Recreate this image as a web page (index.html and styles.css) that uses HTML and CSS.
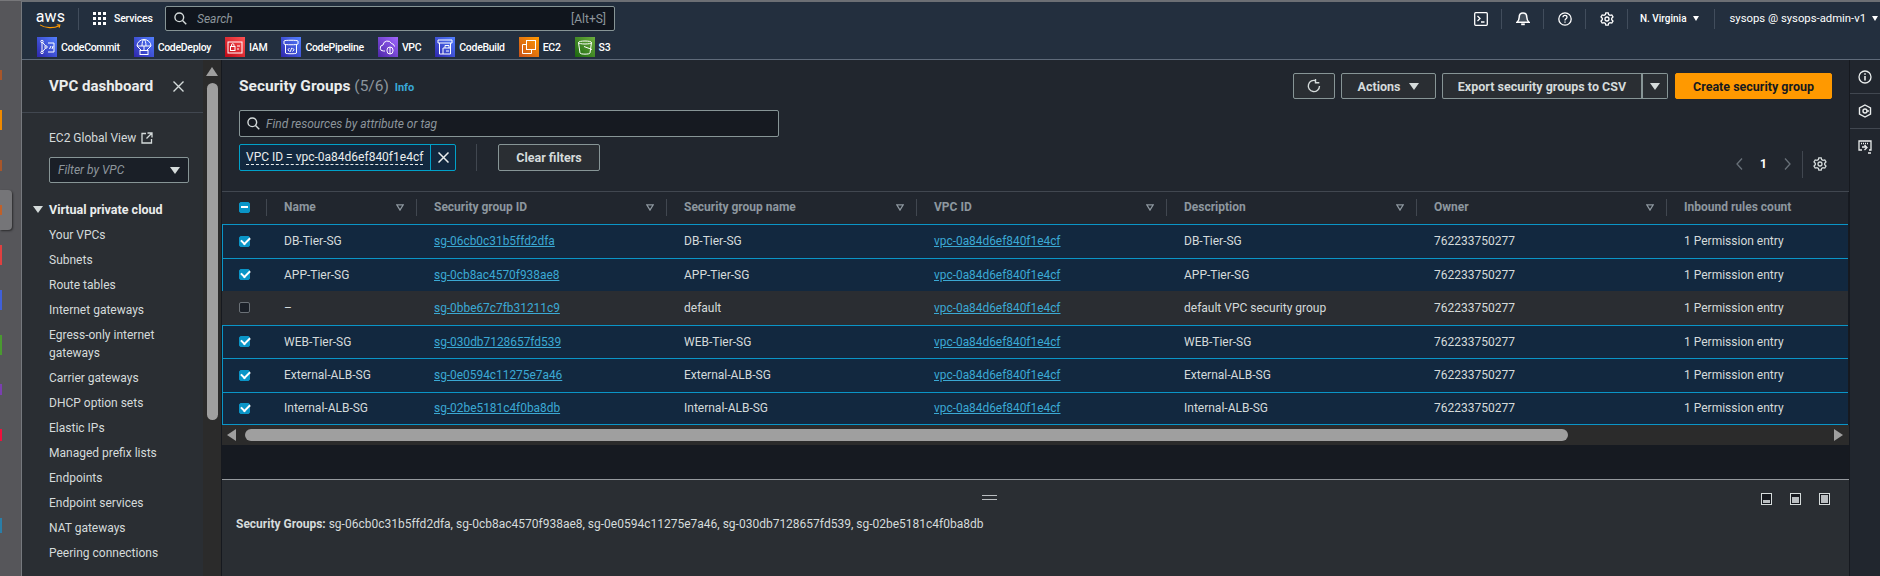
FILE: index.html
```html
<!DOCTYPE html>
<html lang="en">
<head>
<meta charset="UTF-8">
<title>Security Groups | VPC Console</title>
<link rel="stylesheet" href="styles.css">
</head>
<body>
<div class="strip">
  <i class="mark m1"></i>
  <i class="mark m2"></i>
  <i class="mark m3"></i>
  <div class="tile"><i class="mark m4"></i></div>
  <i class="mark m5"></i>
  <i class="mark m6"></i>
  <i class="mark m7"></i>
  <i class="mark m8"></i>
  <i class="mark m9"></i>
  <i class="mark m10"></i>
</div>
<div class="app">
  <header class="topbar">
    <div class="bar-main">
      <div class="logo">
        <span class="logo-text">aws</span>
        <svg class="logo-smile" viewBox="0 0 27 6"><path d="M1 1c6 4 16 4.500 23 1M21 .8l3.800.4-1 3.300" fill="none" stroke="#f90" stroke-width="1.300"/></svg>
      </div>
      <span class="bar-sep"></span>
      <svg class="grid-icon" viewBox="0 0 13 13" fill="#fff"><rect width="3" height="3"/><rect x="5" width="3" height="3"/><rect x="10" width="3" height="3"/><rect y="5" width="3" height="3"/><rect x="5" y="5" width="3" height="3"/><rect x="10" y="5" width="3" height="3"/><rect y="10" width="3" height="3"/><rect x="5" y="10" width="3" height="3"/><rect x="10" y="10" width="3" height="3"/></svg>
      <span class="services">Services</span>
      <div class="search">
        <svg class="search-icon" viewBox="0 0 14 14" fill="none" stroke="#d5dbdb" stroke-width="1.500"><circle cx="5.700" cy="5.700" r="4.700"/><path d="M9.200 9.200l4 4"/></svg>
        <span class="search-text">Search</span>
        <span class="search-key">[Alt+S]</span>
      </div>
      <div class="bar-right">
        <span class="bar-icon"><svg viewBox="0 0 14 14" fill="none" stroke="#fff" stroke-width="1.300"><rect x=".7" y=".7" width="12.600" height="12.600" rx="1"/><path d="M3.500 4l2.500 2.500L3.500 9M7 10h3.500"/></svg></span>
        <span class="bar-icon"><svg viewBox="0 0 14 14" fill="none" stroke="#fff" stroke-width="1.500"><path d="M7 1c-2.600 0-3.800 2-3.800 4.200 0 2.500-.7 3.600-2.200 5h12c-1.500-1.400-2.200-2.500-2.200-5C10.800 3 9.600 1 7 1z" fill="#fff" fill-opacity=".15"/><path d="M5.200 12.300h3.600" stroke-width="1.800"/></svg></span>
        <span class="bar-icon"><svg viewBox="0 0 14 14" fill="none" stroke="#fff" stroke-width="1.300"><circle cx="7" cy="7" r="6.200"/><path d="M5 5.300C5 4 6 3.400 7 3.400s2 .7 2 1.800c0 1.500-2 1.500-2 3.200M7 9.500v1.300"/></svg></span>
        <span class="bar-icon"><svg viewBox="0 0 14 14" fill="none" stroke="#fff" stroke-width="1.300"><path d="M5.800.8h2.400l.4 1.800 1.400.8 1.800-.5 1.200 2-1.300 1.400v1.400l1.300 1.400-1.200 2-1.800-.5-1.400.8-.4 1.800H5.800l-.4-1.800-1.400-.8-1.800.5-1.200-2 1.300-1.400V6.300L1 4.900l1.200-2 1.800.5 1.400-.8z"/><circle cx="7" cy="7" r="2"/></svg></span>
        <span class="bar-menu region">N. Virginia <i class="caret small"></i></span>
        <span class="bar-menu user">sysops @ sysops-admin-v1 <i class="caret small"></i></span>
      </div>
    </div>
    <div class="favs">
      <span class="fav"><svg class="fav-icon blue" viewBox="0 0 20 20" fill="none" stroke="#fff"><circle cx="5" cy="4.500" r="1.200"/><circle cx="5" cy="15.500" r="1.200"/><circle cx="9" cy="10" r="1.200"/><path d="M5 6v8M5.800 5.500L8.500 9M8.500 11l-2.700 3.500M11 6h6v9h-6M12.500 12l1.500-3M15 12l1-3"/></svg>CodeCommit</span>
      <span class="fav"><svg class="fav-icon blue" viewBox="0 0 20 20" fill="none" stroke="#fff"><path d="M3 9a7 6.500 0 0 1 14 0zM3 9l4.500 4.500M17 9l-4.500 4.500M8 9a2 6.500 0 0 1 2-6.500A2 6.500 0 0 1 12 9M10 9v4"/><rect x="6" y="13.500" width="8" height="4"/></svg>CodeDeploy</span>
      <span class="fav"><svg class="fav-icon red" viewBox="0 0 20 20" fill="none" stroke="#fff"><rect x="3" y="5" width="14" height="11"/><rect x="5.500" y="9.500" width="4.500" height="4"/><path d="M6.500 9.500V8a1.200 1.200 0 0 1 2.500 0v1.500M12 9h3M12 12h2"/></svg>IAM</span>
      <span class="fav"><svg class="fav-icon blue" viewBox="0 0 20 20" fill="none" stroke="#fff"><path d="M3 4c0-1 14-1 14 0v3c0 1-14 1-14 0zM4.500 8v8c0 1 11 1 11 0V8M8.500 11l-1.500 1.800 1.500 1.700M11.500 11l1.500 1.800-1.500 1.700M10.700 10.800l-1.400 4"/></svg>CodePipeline</span>
      <span class="fav"><svg class="fav-icon purple" viewBox="0 0 20 20" fill="none" stroke="#fff"><path d="M7 14H5.500a3 3 0 0 1-.5-6 4.500 4.500 0 0 1 8.500-1.500 3.500 3.500 0 0 1 3 3"/><rect x="9" y="10" width="6" height="7" rx="3"/><path d="M12 10v7"/></svg>VPC</span>
      <span class="fav"><svg class="fav-icon blue" viewBox="0 0 20 20" fill="none" stroke="#fff"><path d="M3 3h14v3H3zM4.500 6v11h11V6M8 17V11h8M10 11V8.500h4V11M11 14h3"/></svg>CodeBuild</span>
      <span class="fav"><svg class="fav-icon orange" viewBox="0 0 20 20" fill="none" stroke="#fff"><rect x="7.500" y="3.500" width="9" height="9"/><path d="M7.500 7.500h-4v9h9v-4"/></svg>EC2</span>
      <span class="fav"><svg class="fav-icon green" viewBox="0 0 20 20" fill="none" stroke="#fff"><path d="M3.500 5.500c0-2 13-2 13 0L15 16c0 1.500-10 1.500-10 0z"/><path d="M3.500 5.500c0 2 13 2 13 0M9 9.500l8 3"/></svg>S3</span>
    </div>
  </header>

  <div class="workspace">
    <nav class="sidebar">
      <div class="side-body">
        <div class="side-head">
          <span class="side-title">VPC dashboard</span>
          <svg class="side-close" viewBox="0 0 11 11" fill="none" stroke="#d5dbdb" stroke-width="1.400"><path d="M.5.500l10 10M10.500.500l-10 10"/></svg>
        </div>
        <div class="side-link">EC2 Global View
          <svg class="ext-icon" viewBox="0 0 12 12" fill="none" stroke="#d5dbdb" stroke-width="1.300"><path d="M5 1.500H1v9.500h9.500V7M6.500 1h4.500v4.500M11 1L5.500 6.500"/></svg>
        </div>
        <div class="side-filter"><span>Filter by VPC</span><i class="caret"></i></div>
        <div class="side-section"><i class="caret"></i>Virtual private cloud</div>
        <ul class="side-list">
          <li>Your VPCs</li>
          <li>Subnets</li>
          <li>Route tables</li>
          <li>Internet gateways</li>
          <li>Egress-only internet gateways</li>
          <li>Carrier gateways</li>
          <li>DHCP option sets</li>
          <li>Elastic IPs</li>
          <li>Managed prefix lists</li>
          <li>Endpoints</li>
          <li>Endpoint services</li>
          <li>NAT gateways</li>
          <li>Peering connections</li>
        </ul>
      </div>
      <div class="side-scroll">
        <i class="arrow-up"></i>
        <i class="side-thumb"></i>
      </div>
    </nav>

    <main class="main">
      <section class="list-panel">
        <div class="controls">
          <div class="title-row">
            <h1>Security Groups <span class="count">(5/6)</span> <a class="info">Info</a></h1>
            <div class="actions">
              <button class="btn btn-icon"><svg viewBox="0 0 14 14" fill="none" stroke="#d5dbdb" stroke-width="1.400"><path d="M12.500 7A5.600 5.600 0 1 1 9 1.800M8.500 0v3.800h3.800"/></svg></button>
              <button class="btn btn-actions">Actions <i class="caret"></i></button>
              <div class="split">
                <button class="btn btn-export">Export security groups to CSV</button>
                <button class="btn btn-more"><i class="caret"></i></button>
              </div>
              <button class="btn btn-primary">Create security group</button>
            </div>
          </div>
          <div class="find">
            <svg class="search-icon" viewBox="0 0 14 14" fill="none" stroke="#d5dbdb" stroke-width="1.500"><circle cx="5.700" cy="5.700" r="4.700"/><path d="M9.200 9.200l4 4"/></svg>
            <span class="find-text">Find resources by attribute or tag</span>
          </div>
          <div class="filter-row">
            <div class="token">
              <span class="token-text">VPC ID = vpc-0a84d6ef840f1e4cf</span>
              <span class="token-x"><svg viewBox="0 0 11 11" fill="none" stroke="#eaeded" stroke-width="1.500"><path d="M.5.500l10 10M10.500.500l-10 10"/></svg></span>
            </div>
            <span class="filter-sep"></span>
            <button class="btn btn-clear">Clear filters</button>
            <div class="pager">
              <svg class="chev" viewBox="0 0 7 12" fill="none" stroke="#687078" stroke-width="1.300"><path d="M6 .5L1 6l5 5.500"/></svg>
              <span class="page-num">1</span>
              <svg class="chev" viewBox="0 0 7 12" fill="none" stroke="#687078" stroke-width="1.300"><path d="M1 .5L6 6l-5 5.500"/></svg>
              <span class="pager-sep"></span>
              <svg class="pager-gear" viewBox="0 0 14 14" fill="none" stroke="#d5dbdb" stroke-width="1.300"><path d="M5.800.8h2.400l.4 1.800 1.400.8 1.800-.5 1.200 2-1.300 1.400v1.400l1.300 1.400-1.200 2-1.800-.5-1.400.8-.4 1.800H5.800l-.4-1.800-1.400-.8-1.800.5-1.200-2 1.300-1.400V6.300L1 4.900l1.200-2 1.800.5 1.400-.8z"/><circle cx="7" cy="7" r="2"/></svg>
            </div>
          </div>
        </div>

        <div class="table">
          <div class="row head">
            <div class="cell cell-check"><span class="check minus"></span></div>
            <div class="cell">Name<svg class="sort" viewBox="0 0 8 7"><path d="M.8.800h6.400L4 6z" fill="none" stroke="#8d979f" stroke-width="1.300"/></svg></div>
            <div class="cell">Security group ID<svg class="sort" viewBox="0 0 8 7"><path d="M.8.800h6.400L4 6z" fill="none" stroke="#8d979f" stroke-width="1.300"/></svg></div>
            <div class="cell">Security group name<svg class="sort" viewBox="0 0 8 7"><path d="M.8.800h6.400L4 6z" fill="none" stroke="#8d979f" stroke-width="1.300"/></svg></div>
            <div class="cell">VPC ID<svg class="sort" viewBox="0 0 8 7"><path d="M.8.800h6.400L4 6z" fill="none" stroke="#8d979f" stroke-width="1.300"/></svg></div>
            <div class="cell">Description<svg class="sort" viewBox="0 0 8 7"><path d="M.8.800h6.400L4 6z" fill="none" stroke="#8d979f" stroke-width="1.300"/></svg></div>
            <div class="cell">Owner<svg class="sort" viewBox="0 0 8 7"><path d="M.8.800h6.400L4 6z" fill="none" stroke="#8d979f" stroke-width="1.300"/></svg></div>
            <div class="cell no-sep">Inbound rules count</div>
          </div>
          <div class="row selected">
            <div class="cell cell-check"><span class="check on"></span></div>
            <div class="cell">DB-Tier-SG</div>
            <div class="cell"><a>sg-06cb0c31b5ffd2dfa</a></div>
            <div class="cell">DB-Tier-SG</div>
            <div class="cell"><a>vpc-0a84d6ef840f1e4cf</a></div>
            <div class="cell">DB-Tier-SG</div>
            <div class="cell">762233750277</div>
            <div class="cell">1 Permission entry</div>
          </div>
          <div class="row selected">
            <div class="cell cell-check"><span class="check on"></span></div>
            <div class="cell">APP-Tier-SG</div>
            <div class="cell"><a>sg-0cb8ac4570f938ae8</a></div>
            <div class="cell">APP-Tier-SG</div>
            <div class="cell"><a>vpc-0a84d6ef840f1e4cf</a></div>
            <div class="cell">APP-Tier-SG</div>
            <div class="cell">762233750277</div>
            <div class="cell">1 Permission entry</div>
          </div>
          <div class="row">
            <div class="cell cell-check"><span class="check"></span></div>
            <div class="cell">–</div>
            <div class="cell"><a>sg-0bbe67c7fb31211c9</a></div>
            <div class="cell">default</div>
            <div class="cell"><a>vpc-0a84d6ef840f1e4cf</a></div>
            <div class="cell">default VPC security group</div>
            <div class="cell">762233750277</div>
            <div class="cell">1 Permission entry</div>
          </div>
          <div class="row selected">
            <div class="cell cell-check"><span class="check on"></span></div>
            <div class="cell">WEB-Tier-SG</div>
            <div class="cell"><a>sg-030db7128657fd539</a></div>
            <div class="cell">WEB-Tier-SG</div>
            <div class="cell"><a>vpc-0a84d6ef840f1e4cf</a></div>
            <div class="cell">WEB-Tier-SG</div>
            <div class="cell">762233750277</div>
            <div class="cell">1 Permission entry</div>
          </div>
          <div class="row selected">
            <div class="cell cell-check"><span class="check on"></span></div>
            <div class="cell">External-ALB-SG</div>
            <div class="cell"><a>sg-0e0594c11275e7a46</a></div>
            <div class="cell">External-ALB-SG</div>
            <div class="cell"><a>vpc-0a84d6ef840f1e4cf</a></div>
            <div class="cell">External-ALB-SG</div>
            <div class="cell">762233750277</div>
            <div class="cell">1 Permission entry</div>
          </div>
          <div class="row selected">
            <div class="cell cell-check"><span class="check on"></span></div>
            <div class="cell">Internal-ALB-SG</div>
            <div class="cell"><a>sg-02be5181c4f0ba8db</a></div>
            <div class="cell">Internal-ALB-SG</div>
            <div class="cell"><a>vpc-0a84d6ef840f1e4cf</a></div>
            <div class="cell">Internal-ALB-SG</div>
            <div class="cell">762233750277</div>
            <div class="cell">1 Permission entry</div>
          </div>
        </div>
        <div class="h-scroll">
          <i class="arrow-left"></i>
          <i class="h-thumb"></i>
          <i class="arrow-right"></i>
        </div>
      </section>

      <section class="detail">
        <div class="detail-top">
          <span class="handle"></span>
          <div class="layout-icons">
            <span class="layout l-low"><i></i></span>
            <span class="layout l-mid"><i></i></span>
            <span class="layout l-full"><i></i></span>
          </div>
        </div>
        <p class="detail-text"><b>Security Groups:</b> sg-06cb0c31b5ffd2dfa, sg-0cb8ac4570f938ae8, sg-0e0594c11275e7a46, sg-030db7128657fd539, sg-02be5181c4f0ba8db</p>
      </section>
    </main>

    <aside class="rail">
      <span class="rail-item"><svg viewBox="0 0 14 14" fill="none" stroke="#eaeded" stroke-width="1.300"><circle cx="7" cy="7" r="6"/><path d="M7 6v4.500M7 3.300v1.500" stroke-width="1.600"/></svg></span>
      <span class="rail-item"><svg viewBox="0 0 14 14" fill="none" stroke="#eaeded" stroke-width="1.400"><path d="M7 1l5.500 3v6L7 13l-5.500-3V4z"/><circle cx="7" cy="7" r="2"/><path d="M9 7h2"/></svg></span>
      <span class="rail-item"><svg viewBox="0 0 14 14" fill="none" stroke="#eaeded" stroke-width="1.300"><path d="M4 10H1V1h12v9h-2"/><path d="M3 3.500h8" stroke-dasharray="1 1"/><path d="M4 7h4M6.500 5L9 7.500 6.500 10M10 13h3"/></svg></span>
    </aside>
  </div>
</div>
</body>
</html>
```

FILE: styles.css
```css
* {
  box-sizing: border-box;
}

body {
  margin: 0;
  width: 1880px;
  height: 576px;
  overflow: hidden;
  display: flex;
  background: #56565a;
  color: #d5dbdb;
  font-family: Roboto, "Open Sans", sans-serif;
  font-size: 12px;
}

i {
  display: block;
  font-style: normal;
}

/* left strip, a bit of the window behind */
.strip {
  width: 21px;
  flex: none;
  border-top: 1px solid #77777a;
  display: flex;
  flex-direction: column;
  align-items: flex-start;
}

.mark {
  width: 2px;
}

.m1 { height: 10px; margin-top: 69px; background: #a8562a; }
.m2 { height: 20px; margin-top: 30px; background: #f08a00; }
.m3 { height: 11px; margin-top: 30px; background: #a8562a; }
.m4 { height: 10px; margin-top: 15px; background: #c0602a; }
.m5 { height: 20px; margin-top: 15px; background: #e04040; }
.m6 { height: 20px; margin-top: 25px; background: #4060d8; }
.m7 { height: 20px; margin-top: 25px; background: #4a9a30; }
.m8 { height: 11px; margin-top: 29px; background: #7a3fb0; }
.m9 { height: 12px; margin-top: 34px; background: #f0103c; }
.m10 { height: 15px; margin-top: 77px; background: #2a7ea8; }

.tile {
  width: 12px;
  height: 40px;
  margin-top: 19px;
  background: #757578;
  border-radius: 0 4px 4px 0;
  box-shadow: 1px 1px 2px rgba(0, 0, 0, 0.5);
  overflow: hidden;
}

.app {
  flex: 1;
  min-width: 0;
  display: flex;
  flex-direction: column;
  border-left: 1px solid #76797e;
  border-top: 2px solid #6c6f74;
}

/* top bar */
.topbar {
  height: 58px;
  flex: none;
  background: #232f3e;
  border-bottom: 1px solid #5f6b7a;
  color: #fff;
}

.bar-main {
  height: 35px;
  padding-bottom: 2px;
  display: flex;
  align-items: center;
}

.logo {
  width: 27px;
  margin-left: 15px;
  height: 20px;
  display: flex;
  flex-direction: column;
  align-items: center;
}

.logo-text {
  font-size: 16px;
  line-height: 15px;
  letter-spacing: 0.2px;
}

.logo-smile {
  width: 27px;
  height: 6px;
}

.bar-sep {
  width: 1px;
  height: 22px;
  margin-left: 14px;
  background: #414d5c;
}

.grid-icon {
  width: 13px;
  height: 13px;
  margin-left: 14px;
}

.services {
  margin-left: 8px;
  width: 37px;
  white-space: nowrap;
  font-weight: 500;
  font-size: 10.500px;
  letter-spacing: -0.2px;
}

.search {
  width: 450px;
  height: 25px;
  margin-left: 14px;
  background: #10151d;
  border: 1px solid #879596;
  border-radius: 2px;
  display: flex;
  align-items: center;
  padding: 0 8px;
}

.search-icon {
  width: 13px;
  height: 13px;
  flex: none;
}

.search-text {
  margin-left: 10px;
  font-style: italic;
  color: #8d959c;
  flex: 1;
}

.search-key {
  color: #8d959c;
}

.bar-right {
  margin-left: auto;
  display: flex;
  align-items: center;
}

.bar-icon {
  width: 42px;
  height: 20px;
  display: flex;
  align-items: center;
  justify-content: center;
  border-right: 1px solid #414d5c;
}

.bar-icon svg {
  width: 14px;
  height: 14px;
}

.bar-menu {
  display: flex;
  align-items: center;
  gap: 6px;
  height: 20px;
}

.region {
  padding: 0 15px 0 12px;
  font-size: 10px;
  font-weight: 500;
  border-right: 1px solid #414d5c;
}

.user {
  padding: 0 2px 0 15px;
  font-size: 11.300px;
}

.caret {
  width: 0;
  height: 0;
  border-left: 5px solid transparent;
  border-right: 5px solid transparent;
  border-top: 7px solid #d5dbdb;
}

.caret.small {
  border-left-width: 3.500px;
  border-right-width: 3.500px;
  border-top-width: 5px;
  border-top-color: #fff;
}

.favs {
  height: 22px;
  display: flex;
  align-items: flex-start;
  padding-left: 15px;
  gap: 14px;
}

.fav {
  display: flex;
  align-items: center;
  gap: 4px;
  font-size: 10.500px;
  font-weight: 500;
  letter-spacing: -0.3px;
}

.fav-icon {
  width: 20px;
  height: 20px;
  flex: none;
}

.blue { background: linear-gradient(45deg, #2e27ad, #527fff); }
.red { background: linear-gradient(45deg, #bd0816, #ff5252); }
.purple { background: linear-gradient(45deg, #4d27a8, #a166ff); }
.orange { background: linear-gradient(45deg, #c8511b, #f90); }
.green { background: linear-gradient(45deg, #1b660f, #6cae3e); }

/* body of the page */
.workspace {
  flex: 1;
  min-height: 0;
  display: flex;
}

.sidebar {
  width: 200px;
  flex: none;
  background: #2a2e33;
  display: flex;
  border-right: 1px solid #16191f;
}

.side-body {
  width: 181px;
  flex: none;
}

.side-head {
  height: 53px;
  border-bottom: 1px solid #414750;
  display: flex;
  align-items: center;
  padding-left: 27px;
}

.side-title {
  font-weight: 700;
  font-size: 15px;
  color: #eaeded;
  width: 124px;
}

.side-close {
  width: 11px;
  height: 11px;
}

.side-link {
  display: flex;
  align-items: center;
  gap: 5px;
  margin: 16px 0 0 27px;
  height: 18px;
}

.ext-icon {
  width: 12px;
  height: 12px;
}

.side-filter {
  width: 140px;
  height: 26px;
  margin: 10px 0 0 27px;
  background: #1a1f27;
  border: 1px solid #879596;
  border-radius: 2px;
  display: flex;
  align-items: center;
  justify-content: space-between;
  padding: 0 8px;
  font-style: italic;
  color: #8d959c;
}

.side-section {
  display: flex;
  align-items: center;
  gap: 6px;
  margin: 17px 0 0 11px;
  height: 18px;
  font-weight: 700;
  font-size: 12.500px;
  color: #eaeded;
}

.side-list {
  list-style: none;
  margin: 8px 0 0;
  padding: 0 0 0 27px;
}

.side-list li {
  line-height: 18px;
  margin-bottom: 7px;
}

.side-scroll {
  width: 18px;
  flex: none;
  background: #2b2b2b;
  display: flex;
  flex-direction: column;
  align-items: center;
  padding-top: 7px;
}

.arrow-up {
  width: 0;
  height: 0;
  border-left: 6px solid transparent;
  border-right: 6px solid transparent;
  border-bottom: 9px solid #9f9f9f;
}

.side-thumb {
  width: 11px;
  height: 337px;
  margin-top: 7px;
  background: #9f9f9f;
  border-radius: 6px;
}

.main {
  flex: 1;
  min-width: 0;
  display: flex;
  flex-direction: column;
}

.list-panel {
  height: 420px;
  flex: none;
  background: #161a21;
  border-bottom: 1px solid #95999e;
  overflow: hidden;
}

.controls {
  background: #21262e;
  padding: 13px 17px 0;
}

.title-row {
  height: 26px;
  display: flex;
  justify-content: space-between;
}

h1 {
  margin: 0;
  font-size: 15.500px;
  line-height: 26px;
  font-weight: 700;
  color: #eaeded;
}

.count {
  font-weight: 400;
  color: #8d959c;
}

.info {
  margin-left: 2px;
  font-size: 11px;
  font-weight: 700;
  color: #39a8d8;
}

.actions {
  display: flex;
  gap: 6px;
}

.btn {
  height: 26px;
  padding: 0;
  background: #2a2e33;
  border: 1px solid #879596;
  border-radius: 2px;
  color: #d5dbdb;
  font-family: inherit;
  font-size: 12.500px;
  font-weight: 700;
  display: flex;
  align-items: center;
  justify-content: center;
  white-space: nowrap;
}

.btn-icon {
  width: 42px;
}

.btn-icon svg {
  width: 14px;
  height: 14px;
}

.btn-actions {
  width: 95px;
  gap: 9px;
}

.split {
  display: flex;
}

.btn-export {
  width: 201px;
  border-right-width: 2px;
  border-radius: 2px 0 0 2px;
}

.btn-more {
  width: 25px;
  border-left: 0;
  border-radius: 0 2px 2px 0;
}

.btn-primary {
  width: 157px;
  margin-left: 1px;
  background: #f90;
  border-color: #f90;
  color: #16191f;
}

.find {
  width: 540px;
  height: 27px;
  margin-top: 11px;
  background: #161a21;
  border: 1px solid #879596;
  border-radius: 2px;
  display: flex;
  align-items: center;
  padding-left: 7px;
}

.find-text {
  margin-left: 6px;
  font-style: italic;
  color: #8d959c;
}

.filter-row {
  height: 48px;
  margin: 7px -17px 0;
  display: flex;
  align-items: flex-start;
  padding: 0 17px;
  border-bottom: 1px solid #414750;
}

.token {
  width: 217px;
  height: 27px;
  display: flex;
  background: #12283f;
  border: 1px solid #00a1c9;
  border-radius: 2px;
}

.token-text {
  width: 190px;
  padding-left: 6px;
  line-height: 24px;
  white-space: nowrap;
  overflow: hidden;
  color: #eaeded;
  text-decoration: underline dashed #eaeded;
  text-underline-offset: 3px;
}

.token-x {
  flex: 1;
  border-left: 1px solid #00a1c9;
  display: flex;
  align-items: center;
  justify-content: center;
}

.token-x svg {
  width: 11px;
  height: 11px;
}

.filter-sep {
  width: 1px;
  height: 27px;
  margin-left: 20px;
  background: #414750;
}

.btn-clear {
  width: 102px;
  height: 27px;
  margin-left: 21px;
}

.pager {
  margin-left: auto;
  margin-top: 10px;
  height: 20px;
  display: flex;
  align-items: center;
}

.chev {
  width: 7px;
  height: 12px;
}

.page-num {
  width: 41px;
  text-align: center;
  font-weight: 700;
  color: #fff;
}

.pager-sep {
  width: 1px;
  height: 27px;
  margin-left: 11px;
  background: #414750;
}

.pager-gear {
  width: 14px;
  height: 14px;
  margin: 0 5px 0 10px;
}

.table {
  width: 1626px;
  overflow: hidden;
}

.row {
  display: grid;
  grid-template-columns: 45px 150px repeat(6, 250px);
  height: 33.500px;
  background: #2a2d32;
  align-items: center;
}

.row.head {
  height: 32px;
  padding-bottom: 2px;
  background: #21262e;
  color: #8d979f;
  font-weight: 700;
}

.row.selected {
  background: #12283f;
  border-top: 1px solid #0a95c7;
  border-bottom: 1px solid #0a95c7;
  box-shadow: inset 1px 0 0 #0a95c7;
  margin-bottom: -1px;
  height: 34.500px;
}

.row.selected:last-child {
  margin-bottom: 0;
  height: 33.500px;
}

.cell {
  padding-left: 17px;
  white-space: nowrap;
  overflow: hidden;
  display: flex;
  align-items: center;
}

.cell a {
  color: #3ba9d4;
  font-size: 11.900px;
  text-decoration: underline;
}

.head .cell {
  height: 17px;
  border-right: 1px solid #414750;
  padding-right: 12px;
}

.head .no-sep {
  border-right: 0;
}

.sort {
  width: 8px;
  height: 7px;
  margin-left: auto;
}

.check {
  width: 11px;
  height: 11px;
  display: block;
  background: #1a1f27;
  border: 1px solid #6b7177;
  border-radius: 2px;
  position: relative;
}

.check.on,
.check.minus {
  background: #0a95c7;
  border-color: #0a95c7;
}

.check.on::after {
  content: "";
  position: absolute;
  left: 1px;
  top: 0;
  width: 7px;
  height: 4px;
  border-left: 2px solid #fff;
  border-bottom: 2px solid #fff;
  transform: rotate(-45deg);
}

.check.minus::after {
  content: "";
  position: absolute;
  left: 1px;
  top: 3px;
  width: 7px;
  height: 2px;
  background: #fff;
}

.h-scroll {
  height: 20px;
  background: #2b2b2b;
  display: flex;
  align-items: center;
  padding-left: 5px;
}

.arrow-left {
  width: 0;
  height: 0;
  border-top: 6px solid transparent;
  border-bottom: 6px solid transparent;
  border-right: 9px solid #9f9f9f;
}

.arrow-right {
  width: 0;
  height: 0;
  margin-left: 266px;
  border-top: 6px solid transparent;
  border-bottom: 6px solid transparent;
  border-left: 9px solid #9f9f9f;
}

.h-thumb {
  width: 1323px;
  height: 12px;
  margin-left: 9px;
  background: #9f9f9f;
  border-radius: 6px;
}

.detail {
  flex: 1;
  min-height: 0;
  background: #2a2e33;
}

.detail-top {
  height: 29px;
  padding: 15px 0 0 760px;
  display: flex;
  position: relative;
}

.handle {
  width: 15px;
  height: 5px;
  border-top: 1px solid #b9bdc0;
  border-bottom: 1px solid #b9bdc0;
}

.layout-icons {
  position: absolute;
  right: 19px;
  top: 13px;
  display: flex;
  gap: 18px;
}

.layout {
  width: 11px;
  height: 12px;
  border: 1px solid #d5dbdb;
  background: #16191f;
  display: flex;
  flex-direction: column;
  justify-content: flex-end;
}

.layout i {
  background: #b9bdc0;
  margin: 1px;
  flex: none;
}

.l-low i { height: 3px; }
.l-mid i { height: 6px; }
.l-full i { height: 8px; }

.detail-text {
  margin: 6px 0 0 14px;
  line-height: 18px;
}

.detail-text b {
  font-weight: 700;
}

.rail {
  width: 31px;
  flex: none;
  background: #21262e;
  border-left: 1px solid #16191f;
  display: flex;
  flex-direction: column;
}

.rail-item {
  height: 35px;
  display: flex;
  align-items: center;
  justify-content: center;
  border-bottom: 1px solid #414750;
}

.rail-item:first-child {
  height: 34px;
}

.rail-item:last-child {
  border-bottom: 0;
}

.rail-item svg {
  width: 14px;
  height: 14px;
}
```
